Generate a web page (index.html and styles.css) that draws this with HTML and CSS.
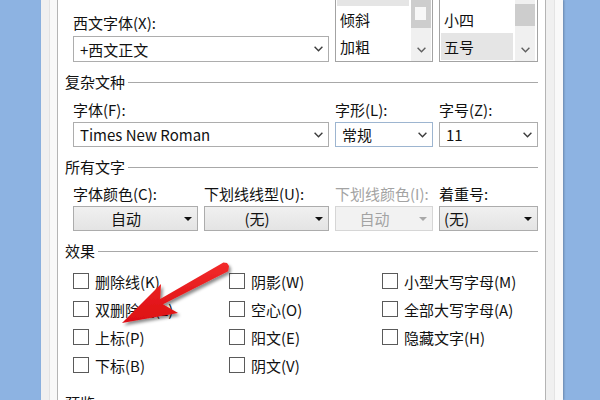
FILE: index.html
```html
<!DOCTYPE html>
<html lang="zh-CN">
<head>
<meta charset="utf-8">
<title>字体</title>
<link rel="stylesheet" href="styles.css">
</head>
<body>
<div class="window">
  <div class="frame-l"></div>
  <div class="page">
    <div class="cols top-row">
      <div class="field-col">
        <div class="label">西文字体(X):</div>
        <div class="combo"><span>+西文正文</span><svg class="chev" viewBox="0 0 9 6"><path d="M0.6 0.8 L4.5 4.7 L8.4 0.8"/></svg></div>
      </div>
      <div class="listbox lb1">
        <div class="items">
          <div class="item sel"></div>
          <div class="item">倾斜</div>
          <div class="item">加粗</div>
        </div>
        <div class="sbar">
          <div class="thumb t1"><div class="grip"></div></div>
          <div class="spacer"></div>
          <div class="sbtn"><svg class="schev" viewBox="0 0 9 6"><path d="M0.6 0.8 L4.5 4.7 L8.4 0.8"/></svg></div>
        </div>
      </div>
      <div class="listbox lb2">
        <div class="items">
          <div class="item"></div>
          <div class="item">小四</div>
          <div class="item sel">五号</div>
        </div>
        <div class="sbar">
          <div class="thumb t2"></div>
          <div class="spacer"></div>
          <div class="sbtn"><svg class="schev" viewBox="0 0 9 6"><path d="M0.6 0.8 L4.5 4.7 L8.4 0.8"/></svg></div>
        </div>
      </div>
    </div>

    <div class="group g1"><span>复杂文种</span></div>
    <div class="cols labels l1">
      <div class="label">字体(F):</div>
      <div class="label">字形(L):</div>
      <div class="label">字号(Z):</div>
    </div>
    <div class="cols">
      <div class="combo"><span>Times New Roman</span><svg class="chev" viewBox="0 0 9 6"><path d="M0.6 0.8 L4.5 4.7 L8.4 0.8"/></svg></div>
      <div class="combo focus"><span>常规</span><svg class="chev" viewBox="0 0 9 6"><path d="M0.6 0.8 L4.5 4.7 L8.4 0.8"/></svg></div>
      <div class="combo"><span>11</span><svg class="chev" viewBox="0 0 9 6"><path d="M0.6 0.8 L4.5 4.7 L8.4 0.8"/></svg></div>
    </div>

    <div class="group g2"><span>所有文字</span></div>
    <div class="cols4 labels l2">
      <div class="label">字体颜色(C):</div>
      <div class="label">下划线线型(U):</div>
      <div class="label disabled">下划线颜色(I):</div>
      <div class="label">着重号:</div>
    </div>
    <div class="cols4">
      <div class="btn"><span class="txt">自动</span><span class="tri"></span></div>
      <div class="btn"><span class="txt">(无)</span><span class="tri"></span></div>
      <div class="btn off"><span class="txt">自动</span><span class="tri"></span></div>
      <div class="btn left"><span class="txt">(无)</span><span class="tri"></span></div>
    </div>

    <div class="group g3"><span>效果</span></div>
    <div class="checks">
      <div class="chk"><span class="box"></span>删除线(K)</div>
      <div class="chk"><span class="box"></span>双删除线(L)</div>
      <div class="chk"><span class="box"></span>上标(P)</div>
      <div class="chk"><span class="box"></span>下标(B)</div>
      <div class="chk"><span class="box"></span>阴影(W)</div>
      <div class="chk"><span class="box"></span>空心(O)</div>
      <div class="chk"><span class="box"></span>阳文(E)</div>
      <div class="chk"><span class="box"></span>阴文(V)</div>
      <div class="chk"><span class="box"></span>小型大写字母(M)</div>
      <div class="chk"><span class="box"></span>全部大写字母(A)</div>
      <div class="chk"><span class="box"></span>隐藏文字(H)</div>
    </div>

    <div class="group g4"><span>预览</span></div>
  </div>
  <div class="frame-r"></div>
</div>

<svg class="arrow" viewBox="0 0 600 400" width="600" height="400">
  <defs>
    <filter id="sh" x="-20%" y="-20%" width="140%" height="140%">
      <feDropShadow dx="2" dy="2.5" stdDeviation="1.8" flood-color="#000" flood-opacity="0.45"/>
    </filter>
    <linearGradient id="rg" x1="0" y1="0" x2="0" y2="1">
      <stop offset="0" stop-color="#f22a2a"/>
      <stop offset="1" stop-color="#dc0f12"/>
    </linearGradient>
  </defs>
  <polygon filter="url(#sh)" fill="url(#rg)" points="122,323 161,284 160.2,299 223.4,262.4 227,263 229,266 228.2,271.2 163,304.2 178,313"/>
</svg>
</body>
</html>
```

FILE: styles.css
```css
* { box-sizing: border-box; }

html, body {
  margin: 0;
  height: 400px;
  overflow: hidden;
}

body {
  position: relative;
  width: 600px;
  background: #8db3e2;
  font-family: "Noto Sans CJK SC", "Noto Sans", sans-serif;
  font-size: 15px;
  color: #111;
}

.window {
  margin-left: 41px;
  width: 522px;
  height: 400px;
  display: flex;
  background: #f0f0f0;
  box-shadow: 1px 0 2px rgba(0, 0, 0, 0.25);
}

.frame-l {
  width: 16px;
  background: linear-gradient(to right, #f0f0f0 0 8px, #e2e2e2 8px 9px, #f8f8f8 9px);
}

.frame-r {
  width: 17px;
  background: linear-gradient(to right, #f0f0f0 0 8px, #e4e4e4 8px 9px, #f9f9f9 9px);
}

.page {
  width: 489px;
  height: 400px;
  background: #fff;
  border-left: 1px solid #b4b4b4;
  border-right: 1px solid #b4b4b4;
  padding: 0 7px;
  overflow: hidden;
}

.label {
  height: 20px;
  line-height: 20px;
  white-space: nowrap;
}

.label.disabled { color: #a3a3a3; }

.cols {
  display: grid;
  grid-template-columns: 256px 98px 99px;
  column-gap: 6px;
  margin-left: 8px;
}

.cols4 {
  display: grid;
  grid-template-columns: 125px 125px 98px 99px;
  column-gap: 6px;
  margin-left: 8px;
}

.top-row { height: 62px; }

.field-col {
  display: flex;
  flex-direction: column;
  justify-content: flex-end;
}

.field-col .label { margin-bottom: 3px; }

.combo {
  height: 26px;
  border: 1px solid #adadad;
  background: #fff;
  display: flex;
  align-items: center;
  justify-content: space-between;
  padding: 0 5px 0 6px;
  white-space: nowrap;
}

.combo.focus { border-color: #9db5d0; }

.chev {
  width: 9px;
  height: 6px;
  fill: none;
  stroke: #3c3c3c;
  stroke-width: 1.4;
}

.listbox {
  height: 62px;
  border: 1px solid #a3a3a3;
  border-top: none;
  display: flex;
  background: #fff;
}

.lb1 { padding-right: 1px; }
.lb2 { padding-right: 2px; }

.items {
  flex: 1;
  overflow: hidden;
}

.lb1 .items .item:first-child,
.lb2 .items .item:first-child { margin-top: -21px; }

.item {
  height: 27px;
  line-height: 27px;
  padding-left: 3px;
  margin: 0 2px 0 1px;
  white-space: nowrap;
}

.item.sel { background: #e5e5e5; }

.sbar {
  width: 20px;
  display: flex;
  flex-direction: column;
  background: #f0f0f0;
}

.thumb { background: #cdcdcd; }
.t1 { height: 28px; padding-top: 7px; }
.t2 { height: 22px; margin-top: 4px; }

.grip {
  width: 11px;
  height: 13px;
  margin-left: 4px;
  background: #f7f7f7;
}

.spacer { flex: 1; }

.sbtn {
  height: 17px;
  margin-bottom: 3px;
  display: flex;
  align-items: center;
  justify-content: center;
}

.schev {
  width: 9px;
  height: 6px;
  fill: none;
  stroke: #606060;
  stroke-width: 1.4;
}

.group {
  display: flex;
  align-items: center;
  height: 20px;
  line-height: 20px;
  white-space: nowrap;
}

.group::after {
  content: "";
  flex: 1;
  height: 1px;
  background: #a8a8a8;
  margin-left: 3px;
}

.g1 { margin-top: 10px; }
.l1 { margin-top: 8px; margin-bottom: 2px; }
.l1 + .cols .combo { height: 25px; }
.g2 { margin-top: 10px; }
.l2 { margin-top: 7px; margin-bottom: 2px; }
.g3 { margin-top: 10px; }
.checks { margin-top: 6px; }
.g4 { margin-top: 14px; }

.btn {
  height: 25px;
  border: 1px solid #acacac;
  background: linear-gradient(#f0f0f0, #e4e4e4);
  display: flex;
  align-items: center;
  padding: 0 5px 0 6px;
  white-space: nowrap;
}

.btn .txt {
  flex: 1;
  text-align: center;
  padding-right: 12px;
}

.btn .tri {
  width: 0;
  height: 0;
  border-left: 4px solid transparent;
  border-right: 4px solid transparent;
  border-top: 4px solid #111;
}

.btn.off {
  background: #f2f2f2;
  border-color: #d6d6d6;
  color: #a3a3a3;
}

.btn.off .tri { border-top-color: #a8a8a8; }

.btn.left { padding-left: 4px; }
.btn.left .txt { text-align: left; padding-right: 0; }

.checks {
  display: grid;
  grid-template-columns: 156px 153px 1fr;
  grid-template-rows: repeat(4, 28px);
  grid-auto-flow: column;
  margin-left: 8px;
}

.chk {
  display: flex;
  align-items: center;
  white-space: nowrap;
}

.box {
  width: 16px;
  height: 16px;
  border: 1px solid #5a5a5a;
  background: #fff;
  margin-right: 6px;
  flex: none;
}

.arrow {
  position: absolute;
  left: 0;
  top: 0;
  pointer-events: none;
}
```
